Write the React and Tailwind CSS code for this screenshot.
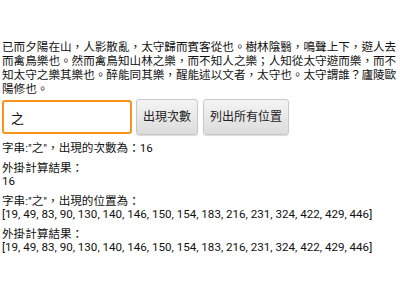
import { useState } from 'react'

const text =
  '已而夕陽在山，人影散亂，太守歸而賓客從也。樹林陰翳，鳴聲上下，遊人去而禽鳥樂也。然而禽鳥知山林之樂，而不知人之樂；人知從太守遊而樂，而不知太守之樂其樂也。醉能同其樂，醒能述以文者，太守也。太守謂誰？廬陵歐陽修也。'

const positions = [19, 49, 83, 90, 130, 140, 146, 150, 154, 183, 216, 231, 324, 422, 429, 446]

export default function App() {
  const [word, setWord] = useState('之')
  const list = '[' + positions.join(', ') + ']'

  return (
    <div
      className="w-[400px] h-[300px] overflow-hidden bg-white text-[#111] px-[2px] pt-[40px]"
      style={{ fontFamily: 'Roboto, "Noto Sans CJK TC", sans-serif' }}
    >
      <p className="text-[11.6px] leading-[14px]">{text}</p>

      <div className="flex items-center mt-[3px]">
        <input
          value={word}
          onChange={(e) => setWord(e.target.value)}
          className="w-[130px] h-[34px] px-[7px] text-[13px] border-2 border-[#f7931e] rounded-[3px] outline-none bg-white"
        />
        <button className="ml-[4px] h-[36px] px-[6px] text-[12px] text-[#222] rounded-[3px] border border-[#c8c8c8] bg-gradient-to-b from-[#f4f4f4] to-[#dcdcdc] shadow-[0_1px_1px_rgba(0,0,0,0.15)]">
          出現次數
        </button>
        <button className="ml-[5px] h-[36px] px-[6px] text-[12px] text-[#222] rounded-[3px] border border-[#c8c8c8] bg-gradient-to-b from-[#f4f4f4] to-[#dcdcdc] shadow-[0_1px_1px_rgba(0,0,0,0.15)]">
          列出所有位置
        </button>
      </div>

      <div className="mt-[7px] text-[11.6px] leading-[13.5px] space-y-[6px]">
        <p>字串:"{word}"，出現的次數為：{positions.length}</p>
        <p>
          外掛計算結果：
          <br />
          {positions.length}
        </p>
        <p>
          字串:"{word}"，出現的位置為：
          <br />
          {list}
        </p>
        <p>
          外掛計算結果：
          <br />
          {list}
        </p>
      </div>
    </div>
  )
}
